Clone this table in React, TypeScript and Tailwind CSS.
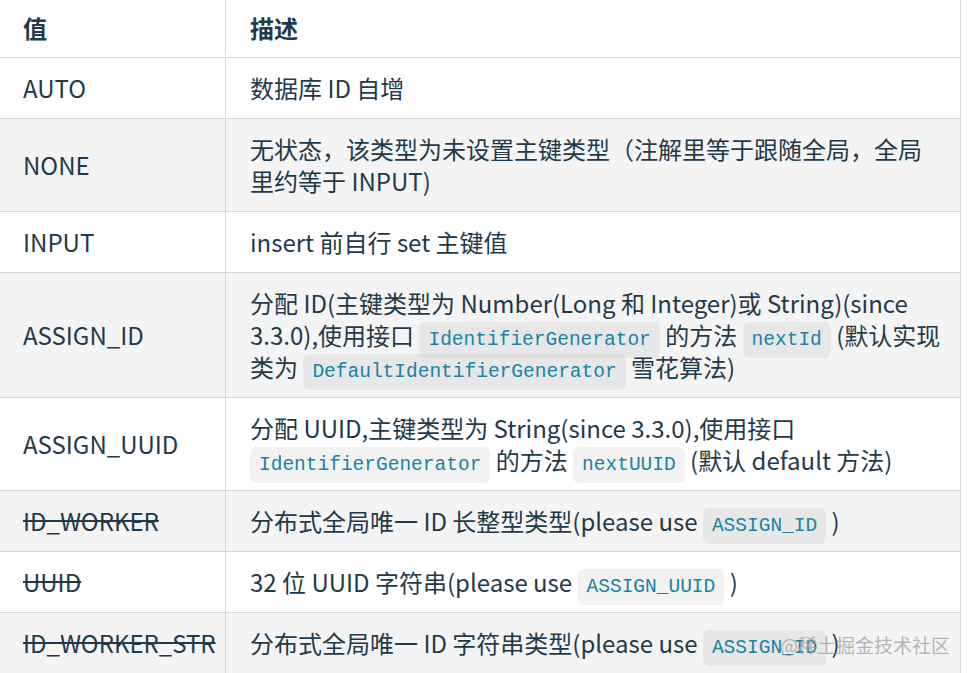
import React from 'react';

const Code: React.FC<{ children: React.ReactNode }> = ({ children }) => (
  <code className="rounded-md bg-black/[0.05] px-[9px] py-[7px] align-baseline font-['Liberation_Mono',monospace] text-[19.5px] leading-none text-[#1a82a6]">
    {children}
  </code>
);

type Row = { value: string; deprecated?: boolean; lines: React.ReactNode[] };

const rows: Row[] = [
  { value: 'AUTO', lines: [<>数据库 ID 自增</>] },
  {
    value: 'NONE',
    lines: [<>无状态，该类型为未设置主键类型（注解里等于跟随全局，全局</>, <>里约等于 INPUT)</>],
  },
  { value: 'INPUT', lines: [<>insert 前自行 set 主键值</>] },
  {
    value: 'ASSIGN_ID',
    lines: [
      <>分配 ID(主键类型为 Number(Long 和 Integer)或 String)(since</>,
      <>
        3.3.0),使用接口 <Code>IdentifierGenerator</Code> 的方法 <Code>nextId</Code> (默认实现
      </>,
      <>
        类为 <Code>DefaultIdentifierGenerator</Code> 雪花算法)
      </>,
    ],
  },
  {
    value: 'ASSIGN_UUID',
    lines: [
      <>分配 UUID,主键类型为 String(since 3.3.0),使用接口</>,
      <>
        <Code>IdentifierGenerator</Code> 的方法 <Code>nextUUID</Code> (默认 default 方法)
      </>,
    ],
  },
  {
    value: 'ID_WORKER',
    deprecated: true,
    lines: [
      <>
        分布式全局唯一 ID 长整型类型(please use <Code>ASSIGN_ID</Code> )
      </>,
    ],
  },
  {
    value: 'UUID',
    deprecated: true,
    lines: [
      <>
        32 位 UUID 字符串(please use <Code>ASSIGN_UUID</Code> )
      </>,
    ],
  },
  {
    value: 'ID_WORKER_STR',
    deprecated: true,
    lines: [
      <>
        分布式全局唯一 ID 字符串类型(please use <Code>ASSIGN_ID</Code> )
      </>,
    ],
  },
];

export default function App() {
  return (
    <div className="relative h-[673px] w-[971px] overflow-hidden bg-white font-['Noto_Sans_CJK_SC',sans-serif] text-[24px] leading-[32px] text-[#1f3a4a]">
      <div className="w-[961px] border-r border-[#d6d6d6]">
        <div className="flex h-[58px] border-b border-[#d6d6d6] pb-[2px] font-bold">
          <div className="flex w-[226px] shrink-0 items-center border-r border-[#d6d6d6] pl-[23px]">值</div>
          <div className="flex flex-1 items-center px-6">描述</div>
        </div>
        {rows.map((row, i) => (
          <div
            key={row.value}
            className={`flex border-b border-[#d6d6d6] ${i % 2 === 1 ? 'bg-[#f4f4f4]' : 'bg-white'}`}
          >
            <div className="flex w-[226px] shrink-0 items-center border-r border-[#d6d6d6] pl-[23px]">
              <span className={row.deprecated ? 'line-through' : ''}>{row.value}</span>
            </div>
            <div className="flex-1 px-6 py-[14px]">
              {row.lines.map((line, j) => (
                <div key={j} className="h-[32px] whitespace-nowrap">
                  {line}
                </div>
              ))}
            </div>
          </div>
        ))}
      </div>
      <div className="absolute right-[21px] top-[631px] font-['Noto_Sans_CJK_SC',sans-serif] text-[19px] leading-[28px] text-[#a3a3a3]/80">
        @稀土掘金技术社区
      </div>
    </div>
  );
}
